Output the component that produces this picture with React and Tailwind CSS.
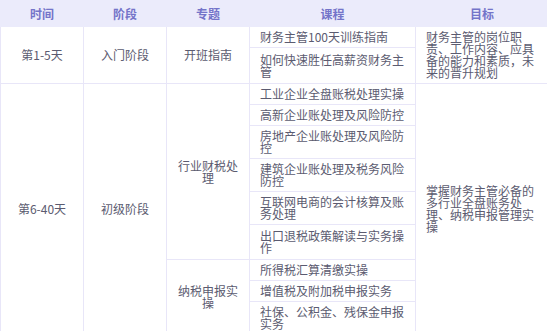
import React from 'react';

const sections = [
  {
    time: '第1-5天',
    stage: '入门阶段',
    goal: '财务主管的岗位职责、工作内容、应具备的能力和素质，未来的晋升规划',
    topics: [
      {
        name: '开班指南',
        courses: [
          ['财务主管100天训练指南', 'h-[21px]'],
          ['如何快速胜任高薪资财务主管', 'h-[35px]'],
        ],
      },
    ],
  },
  {
    time: '第6-40天',
    stage: '初级阶段',
    goal: '掌握财务主管必备的多行业全盘账务处理、纳税申报管理实操',
    topics: [
      {
        name: '行业财税处理',
        courses: [
          ['工业企业全盘账税处理实操', 'h-[21px]'],
          ['高新企业账处理及风险防控', 'h-[21px]'],
          ['房地产企业账处理及风险防控', 'h-[32px]'],
          ['建筑企业账处理及税务风险防控', 'h-[33px]'],
          ['互联网电商的会计核算及账务处理', 'h-[33px]'],
          ['出口退税政策解读与实务操作', 'h-[35px]'],
        ],
      },
      {
        name: '纳税申报实操',
        courses: [
          ['所得税汇算清缴实操', 'h-[21px]'],
          ['增值税及附加税申报实务', 'h-[21px]'],
          ['社保、公积金、残保金申报实务', 'h-[33px]'],
        ],
      },
    ],
  },
];

const cell = 'border border-[#e8e6f8] px-[10px] py-[4px] leading-[12px]';

export default function App() {
  return (
    <div className="w-[547px] h-[331px] overflow-hidden bg-white" style={{ fontFamily: '"Noto Sans CJK SC", "Noto Sans", sans-serif' }}>
      <table className="w-[548px] table-fixed border-collapse text-[12px] text-[#5b5b70]">
        <colgroup>
          <col className="w-[83px]" />
          <col className="w-[83px]" />
          <col className="w-[83px]" />
          <col className="w-[166px]" />
          <col className="w-[133px]" />
        </colgroup>
        <thead>
          <tr className="h-[26px] bg-[#ebebfb] text-[#7474c9]">
            <th className="border border-[#ebebfb] font-bold">时间</th>
            <th className="border border-[#ebebfb] font-bold">阶段</th>
            <th className="border border-[#ebebfb] font-bold">专题</th>
            <th className="border border-[#ebebfb] font-bold">课程</th>
            <th className="border border-[#ebebfb] font-bold">目标</th>
          </tr>
        </thead>
        <tbody>
          {sections.map((s) => {
            const total = s.topics.reduce((n, t) => n + t.courses.length, 0);
            const rows = [];
            s.topics.forEach((t, ti) => {
              t.courses.forEach(([course, h], ci) => {
                const first = ti === 0 && ci === 0;
                rows.push(
                  <tr key={course} className={h}>
                    {first && <td rowSpan={total} className={`${cell} text-center`}>{s.time}</td>}
                    {first && <td rowSpan={total} className={`${cell} text-center`}>{s.stage}</td>}
                    {ci === 0 && <td rowSpan={t.courses.length} className={`${cell} text-center`}>{t.name}</td>}
                    <td className={cell}>{course}</td>
                    {first && <td rowSpan={total} className={`${cell} align-middle`}>{s.goal}</td>}
                  </tr>
                );
              });
            });
            return rows;
          })}
        </tbody>
      </table>
    </div>
  );
}
